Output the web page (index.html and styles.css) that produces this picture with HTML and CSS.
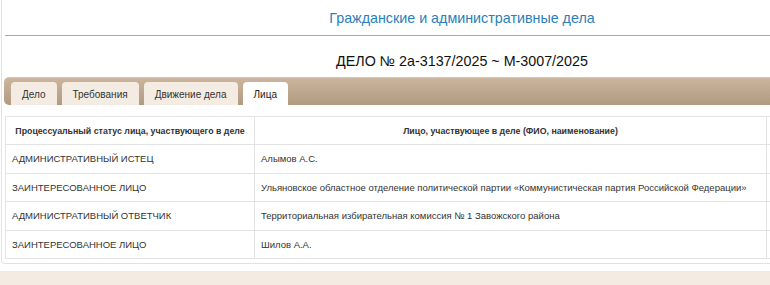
FILE: index.html
```html
<!DOCTYPE html>
<html lang="ru">

<head>
  <meta charset="UTF-8">
  <meta name="viewport" content="width=device-width, initial-scale=1.0">
  <title>Дело № 2а-3137/2025</title>
  <link rel="stylesheet" href="styles.css">
</head>

<body>
  <div class="page">
    <h2 class="section-title">Гражданские и административные дела</h2>
    <hr class="rule">
    <h1 class="case-number">ДЕЛО № 2а-3137/2025 ~ М-3007/2025</h1>

    <div class="tabs">
      <ul class="tab-list">
        <li class="tab"><a href="javascript:;">Дело</a></li>
        <li class="tab"><a href="javascript:;">Требования</a></li>
        <li class="tab"><a href="javascript:;">Движение дела</a></li>
        <li class="tab active"><a href="javascript:;">Лица</a></li>
      </ul>
    </div>

    <div class="tab-body">
      <table class="parties">
        <thead>
          <tr>
            <th class="col-status">Процессуальный статус лица, участвующего в деле</th>
            <th class="col-name">Лицо, участвующее в деле (ФИО, наименование)</th>
            <th class="col-extra"></th>
          </tr>
        </thead>
        <tbody>
          <tr>
            <td>АДМИНИСТРАТИВНЫЙ ИСТЕЦ</td>
            <td>Алымов А.С.</td>
            <td></td>
          </tr>
          <tr>
            <td>ЗАИНТЕРЕСОВАННОЕ ЛИЦО</td>
            <td>Ульяновское областное отделение политической партии «Коммунистическая партия Российской Федерации»</td>
            <td></td>
          </tr>
          <tr>
            <td>АДМИНИСТРАТИВНЫЙ ОТВЕТЧИК</td>
            <td>Территориальная избирательная комиссия № 1 Завожского района</td>
            <td></td>
          </tr>
          <tr>
            <td>ЗАИНТЕРЕСОВАННОЕ ЛИЦО</td>
            <td>Шилов А.А.</td>
            <td></td>
          </tr>
        </tbody>
      </table>
    </div>
  </div>

  <div class="footer"></div>
</body>

</html>
```

FILE: styles.css
```css
* {
  padding: 0;
  margin: 0;
  box-sizing: border-box;
}

html,
body {
  overflow: hidden;
}

body {
  width: 930px;
  background-color: #fff;
  font-family: "Liberation Sans", Arial, sans-serif;
  color: #333;
}

.page {
  width: 920px;
  margin-left: 1px;
  border: 1px solid #e2e2e2;
  border-top: none;
  border-radius: 0 0 4px 4px;
  padding: 0 0 4px 2px;
}

.section-title {
  font-size: 14.3px;
  font-weight: normal;
  color: #2a7fb8;
  text-align: center;
  line-height: 18px;
  padding-top: 9px;
  height: 35px;
}

.rule {
  border: none;
  border-top: 1px solid #a9a9a9;
  margin-left: 1px;
}

.case-number {
  font-size: 14.3px;
  font-weight: normal;
  color: #111;
  text-align: center;
  line-height: 18px;
  padding-top: 16px;
  height: 41px;
}

.tabs {
  height: 28px;
  border-radius: 5px 0 0 5px;
  background: linear-gradient(#cbb59d, #b09a80);
  border-top: 1px solid #d8c7b4;
  padding: 4px 0 0 7px;
}

.tab-list {
  list-style-type: none;
  display: flex;
  gap: 5px;
  height: 100%;
}

.tab a {
  display: flex;
  align-items: center;
  height: 100%;
  padding: 1px 11px 0;
  font-size: 10px;
  color: #333;
  text-decoration: none;
  background-color: #f4ece2;
  border-radius: 4px 4px 0 0;
}

.tab.active a {
  background-color: #fff;
  color: #222;
}

.tab-body {
  padding: 11px 0 0 1px;
}

.parties {
  width: 913px;
  border-collapse: collapse;
  border: 1px solid #e3e3e3;
  font-size: 9.5px;
  color: #333;
  table-layout: fixed;
}

.parties th,
.parties td {
  border: 1px solid #e3e3e3;
  height: 28.5px;
  text-align: left;
  padding: 0 6px;
  font-weight: normal;
  white-space: nowrap;
}

.parties th {
  height: 28px;
  padding: 0 4px;
  font-size: 8.8px;
  font-weight: bold;
  text-align: center;
  color: #333;
}

.col-status {
  width: 249px;
}

.col-name {
  width: 512px;
}

.footer {
  height: 20px;
  margin-top: 7px;
  background-color: #f4ece2;
}
```
